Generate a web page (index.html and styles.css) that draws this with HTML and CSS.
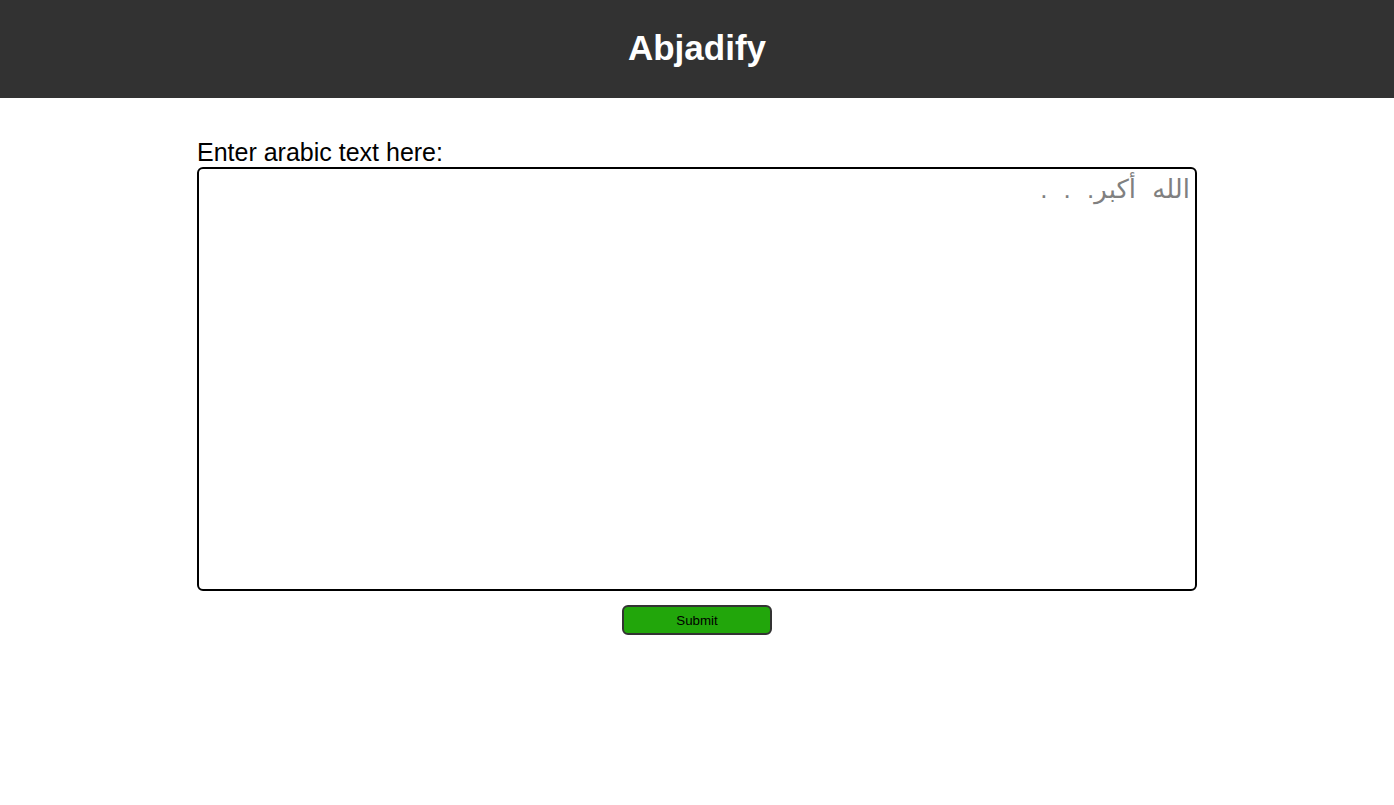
FILE: index.html
```html
<!DOCTYPE html>
<html lang="en">
<head>
<meta charset="utf-8">
<title>Abjadify</title>
<link rel="stylesheet" href="styles.css">
</head>
<body>
<header class="topbar">
  <h1 class="brand">Abjadify</h1>
</header>
<main class="content">
  <form class="entry-form">
    <label class="entry-label" for="arabic">Enter arabic text here:</label>
    <textarea id="arabic" class="entry-box" dir="rtl" placeholder="الله أكبر. . ."></textarea>
    <div class="actions">
      <button type="button" class="submit-btn">Submit</button>
    </div>
  </form>
</main>
</body>
</html>
```

FILE: styles.css
```css
html, body {
  margin: 0;
  padding: 0;
  background: #fff;
  font-family: "Liberation Sans", Arial, "DejaVu Sans", sans-serif;
}

.topbar {
  height: 98px;
  background: #323232;
  display: flex;
  align-items: center;
  justify-content: center;
}

.brand {
  margin: 0 0 2px;
  color: #fff;
  font-size: 35px;
  font-weight: bold;
  font-family: "Liberation Sans", Arial, sans-serif;
}

.content {
  padding-top: 40px;
  display: flex;
  justify-content: center;
}

.entry-form {
  width: 1000px;
  display: flex;
  flex-direction: column;
}

.entry-label {
  display: block;
  font-size: 25px;
  color: #000;
  line-height: 29px;
}

.entry-box {
  box-sizing: border-box;
  width: 1000px;
  height: 424px;
  border: 2px solid #000;
  border-radius: 6px;
  padding: 5px 5px;
  font-size: 26px;
  word-spacing: 9px;
  font-family: "Liberation Sans", Arial, "DejaVu Sans", sans-serif;
  resize: none;
  outline: none;
  margin: 0;
}

.entry-box::placeholder {
  color: #808080;
}

.actions {
  display: flex;
  justify-content: center;
  padding-top: 14px;
}

.submit-btn {
  box-sizing: border-box;
  width: 150px;
  height: 30px;
  background: #22a60b;
  border: 2px solid #333;
  border-radius: 6px;
  font-family: "Liberation Sans", Arial, sans-serif;
  font-size: 13.333px;
  color: #000;
  padding: 0;
}
```
